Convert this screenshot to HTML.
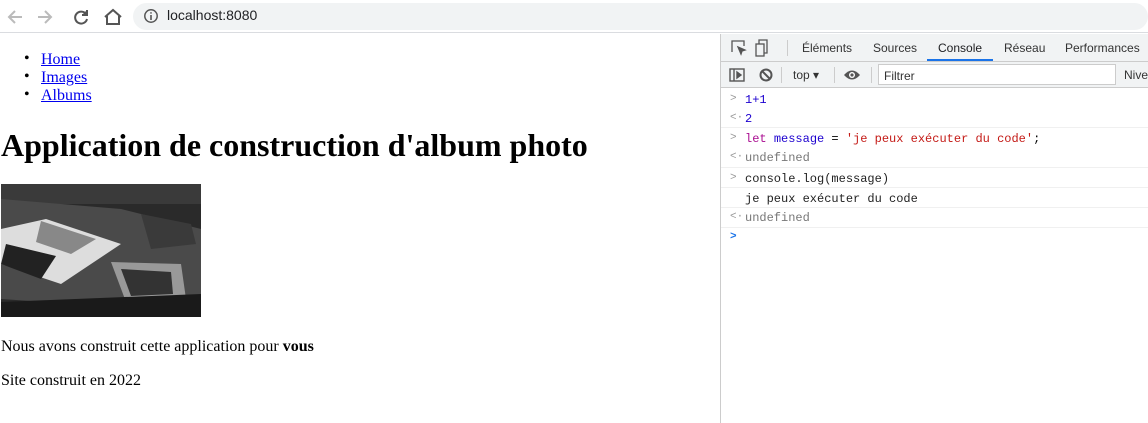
<!DOCTYPE html>
<html><head><meta charset="utf-8"><style>
*{margin:0;padding:0;box-sizing:border-box}
body{width:1148px;height:423px;overflow:hidden;background:#fff;position:relative;font-family:"Liberation Serif",serif}
.top{position:absolute;left:0;top:0;width:1148px;height:33px;background:#fff;border-bottom:1px solid #dadce0}
.pill{position:absolute;left:133px;top:3px;width:1015px;height:27px;background:#f1f3f4;border-radius:14px}
.url{position:absolute;left:167px;top:7px;font:14px "Liberation Sans",sans-serif;color:#202124}
.page{position:absolute;left:0;top:35px;width:720px;height:388px}
.t{position:absolute;font-size:16px;color:#000;white-space:nowrap}
a{color:#0000ee;text-decoration:underline}
.dev{position:absolute;left:720px;top:34px;width:428px;height:389px;border-left:1px solid #ccc;font-family:"Liberation Sans",sans-serif}
.tabs{height:28px;background:#f1f3f4;border-bottom:1px solid #ccc;position:relative;font-size:12px;color:#333}
.tabs span{position:absolute;top:7px}
.bar{height:26px;background:#f1f3f4;border-bottom:1px solid #ccc;position:relative;font-size:12px;color:#333}
.row{position:absolute;left:0;width:428px;font:12px "Liberation Mono",monospace;white-space:nowrap}
.ln{position:absolute;left:0;width:428px;height:1px;background:#f0f0f0}
.g{color:#999;position:absolute;left:9px;font-size:11px}
</style></head><body>
<div class="top">
<svg style="position:absolute;left:6px;top:8px" width="120" height="18" viewBox="0 0 120 18" fill="none" stroke-width="2">
<path d="M16 9H3M9 3L3 9l6 6" stroke="#bbb"/>
<path d="M32 9h13M39 3l6 6-6 6" stroke="#bbb"/>
<path d="M80 6a6 6 0 1 0 1 5" stroke="#555"/><path d="M81 2v5h-5" stroke="#555" fill="#555"/>
<path d="M99 9l8-7 8 7M101 8v8h12V8" stroke="#555"/>
</svg>
<div class="pill"></div>
<svg style="position:absolute;left:143px;top:8px" width="16" height="16" viewBox="0 0 16 16"><circle cx="8" cy="8" r="6.2" fill="none" stroke="#555" stroke-width="1.5"/><path d="M8 7v5M8 4.2v1.4" stroke="#555" stroke-width="1.6"/></svg>
<div class="url">localhost:8080</div>
</div>
<div class="page">
<div class="t" style="left:24px;top:15px">•</div><div class="t" style="left:41px;top:16px"><a>Home</a></div>
<div class="t" style="left:24px;top:33px">•</div><div class="t" style="left:41px;top:34px"><a>Images</a></div>
<div class="t" style="left:24px;top:51px">•</div><div class="t" style="left:41px;top:52px"><a>Albums</a></div>
<div class="t" style="left:1px;top:92px;font-size:32px;font-weight:bold">Application de construction d'album photo</div>
<svg style="position:absolute;left:1px;top:149px" width="200" height="133" viewBox="0 0 200 133">
<rect width="200" height="133" fill="#2a2a2a"/>
<rect width="200" height="20" fill="#3a3a3a"/>
<path d="M0 15L120 25 200 45V110L150 125 0 115Z" fill="#4a4a4a"/>
<path d="M0 45L45 35 120 60 60 100 0 80Z" fill="#ddd"/>
<path d="M40 37L95 55 70 70 35 58Z" fill="#888"/>
<path d="M5 60L55 72 40 95 0 80Z" fill="#222"/>
<path d="M110 78L180 80 185 115 125 118Z" fill="#999"/>
<path d="M120 85L170 88 172 110 130 112Z" fill="#333"/>
<path d="M140 30L190 40 195 60 150 65Z" fill="#3a3a3a"/>
<path d="M0 118L200 110V133H0Z" fill="#1a1a1a"/>
</svg>
<div class="t" style="left:1px;top:303px">Nous avons construit cette application pour <b>vous</b></div>
<div class="t" style="left:1px;top:337px">Site construit en 2022</div>
</div>
<div class="dev">
<div class="tabs">
<svg style="position:absolute;left:9px;top:5px" width="40" height="18" viewBox="0 0 40 18" fill="none" stroke="#555" stroke-width="1.3"><path d="M2 13V2h12v5"/><path d="M8 8l7 3-3 1-1 3z" fill="#555"/><rect x="26" y="5" width="8" height="12"/><path d="M29 5V1h8v13h-3"/></svg>
<div style="position:absolute;left:66px;top:6px;width:1px;height:16px;background:#ccc"></div>
<span style="left:81px">Éléments</span><span style="left:152px">Sources</span><span style="left:217px;color:#202124">Console</span><span style="left:283px">Réseau</span><span style="left:344px">Performances</span>
<div style="position:absolute;left:206px;top:25px;width:66px;height:2px;background:#1a73e8"></div>
</div>
<div class="bar">
<svg style="position:absolute;left:8px;top:5px" width="110" height="16" viewBox="0 0 110 16" fill="none" stroke="#555" stroke-width="1.4"><rect x="1" y="2" width="14" height="12"/><path d="M5 2v12"/><path d="M8 5l4 3-4 3z" fill="#555"/><circle cx="37" cy="8" r="5.5" stroke-width="2"/><path d="M33 4l8 8" stroke-width="2"/></svg>
<div style="position:absolute;left:60px;top:5px;width:1px;height:16px;background:#ccc"></div>
<span style="position:absolute;left:72px;top:6px">top ▾</span>
<div style="position:absolute;left:113px;top:5px;width:1px;height:16px;background:#ccc"></div>
<svg style="position:absolute;left:122px;top:6px" width="18" height="14" viewBox="0 0 18 14"><path d="M1 7Q9-2 17 7Q9 16 1 7Z" fill="#555"/><circle cx="9" cy="7" r="3" fill="#fff"/><circle cx="9" cy="7" r="1.6" fill="#555"/></svg>
<div style="position:absolute;left:150px;top:5px;width:1px;height:16px;background:#ccc"></div>
<div style="position:absolute;left:157px;top:2px;width:238px;height:21px;background:#fff;border:1px solid #ccc;padding:4px 5px;color:#333">Filtrer</div>
<span style="position:absolute;left:403px;top:6px">Niveaux</span>
</div>
<div class="row" style="top:59px"><span class="g">&gt;</span><span style="position:absolute;left:24px;color:#1c00cf">1+1</span></div>
<div class="row" style="top:78px"><span class="g">&lt;·</span><span style="position:absolute;left:24px;color:#1c00cf">2</span></div>
<div class="ln" style="top:93px"></div>
<div class="row" style="top:98px"><span class="g">&gt;</span><span style="position:absolute;left:24px"><span style="color:#aa0d91">let</span> <span style="color:#1c00cf">message</span> = <span style="color:#c41a16">'je peux exécuter du code'</span>;</span></div>
<div class="row" style="top:117px"><span class="g">&lt;·</span><span style="position:absolute;left:24px;color:#777">undefined</span></div>
<div class="ln" style="top:133px"></div>
<div class="row" style="top:138px"><span class="g">&gt;</span><span style="position:absolute;left:24px;color:#222">console.log(message)</span></div>
<div class="ln" style="top:153px"></div>
<div class="row" style="top:158px"><span style="position:absolute;left:24px;color:#222">je peux exécuter du code</span></div>
<div class="ln" style="top:173px"></div>
<div class="row" style="top:177px"><span class="g">&lt;·</span><span style="position:absolute;left:24px;color:#777">undefined</span></div>
<div class="ln" style="top:193px"></div>
<div class="row" style="top:197px"><span class="g" style="color:#1a73e8;font-weight:bold">&gt;</span></div>
</div>
</body></html>
